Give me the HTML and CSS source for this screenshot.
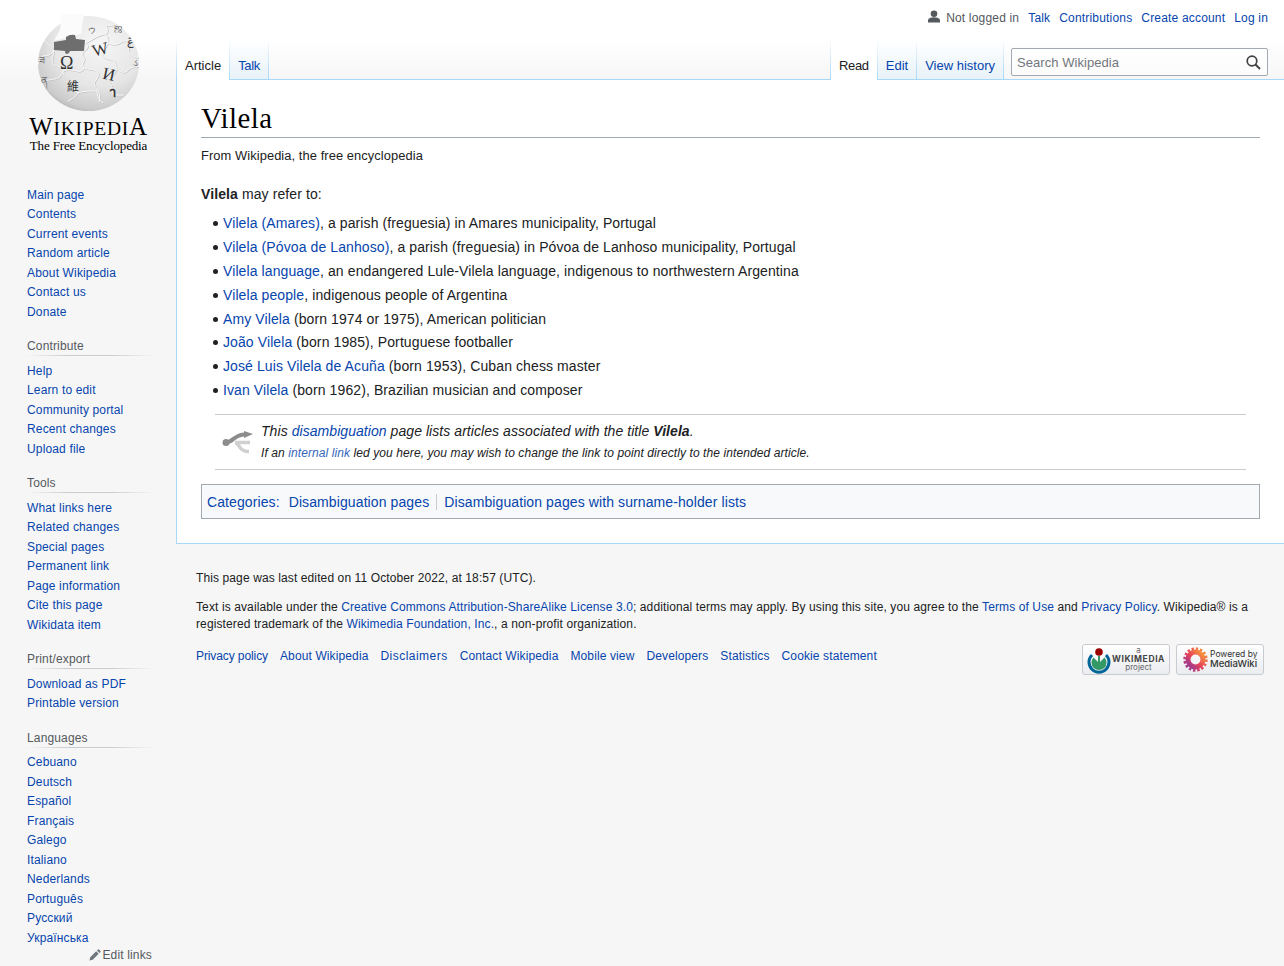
FILE: index.html
```html
<!DOCTYPE html>
<html lang="en">
    <head>
        <meta charset="UTF-8" />
        <title>Vilela - Wikipedia</title>
        <link rel="stylesheet" href="styles.css">
    </head>
    <body>
        <div class="page">
            <!-- 侧边栏 -->
            <aside class="sidebar">
                <a class="logo" href="#">
                    <svg class="globe" width="176" height="116" viewBox="0 0 176 116">
                        <defs>
                            <radialGradient id="ball" cx="0.6" cy="0.3" r="0.8">
                                <stop offset="0" stop-color="#f6f6f6" />
                                <stop offset="0.55" stop-color="#e6e6e6" />
                                <stop offset="0.85" stop-color="#cbcbcb" />
                                <stop offset="1" stop-color="#9e9e9e" />
                            </radialGradient>
                            <!-- 拼图线 -->
                            <g id="puzzle" fill="none" stroke-width="1">
                                <path d="M85 43c5 3 2 6 -1 8c-4 3 0 6 1 8c-2 3 -3 6 -1 9c5 2 9 1 13 3c3 3 1 6 -1 9c-3 3 -1 7 2 10c2 4 2 8 1 12" />
                                <path d="M85 43c6 -2 12 -8 20 -9c4 -1 3 -5 1 -8c3 -1 7 0 10 -2" />
                                <path d="M105 34c4 3 3 6 3 9c4 2 8 2 12 0c3 -3 5 -2 9 -1c1 4 0 7 -1 10c3 4 6 5 10 6" />
                                <path d="M108 43c-2 5 -5 7 -6 11c1 4 5 6 11 5c3 3 2 6 4 10c3 3 5 4 9 3c3 -3 6 -6 12 -5" />
                                <path d="M117 69c-2 5 -6 8 -8 11c2 5 4 8 4 14c3 2 7 1 11 1" />
                                <path d="M44 40c3 4 7 6 10 8M54 50c-2 5 -7 6 -11 6c-3 3 -4 6 -5 9" />
                                <path d="M54 51c-1 6 -3 10 -1 14c5 1 8 2 10 6c-1 4 -3 7 -8 8c-4 0 -7 2 -10 1" />
                                <path d="M63 71c5 -2 8 -1 14 0c3 2 8 -2 7 -3M63 71c0 4 3 7 7 10c3 5 5 9 8 12c-2 4 -6 6 -10 8" />
                                <path d="M78 93c5 -2 11 -2 19 -2M97 91c0 6 3 9 6 12" />
                            </g>
                        </defs>
                        <ellipse cx="88.500" cy="63.500" rx="50.500" ry="47.500" fill="url(#ball)" />
                        <use href="#puzzle" x="0.600" y="0.600" stroke="#bdbdbd" />
                        <use href="#puzzle" stroke="#f8f8f8" />
                        <!-- 顶部缺口 -->
                        <path d="M62 14L84 14L81 34L73 36L54 41L60 30Z" fill="#fbfbfb" />
                        <path d="M54 42L66 40L66 37Q70 34 75 35L76 39L85 40L84 51L70 51Q69 54 67 54Q65 54 65 51L54 50Z" fill="#6e6e6e" />
                        <g class="globe-glyphs">
                            <text x="60" y="69" font-size="18">Ω</text>
                            <text x="92" y="55" font-size="17" transform="rotate(-14 100 49)">W</text>
                            <text x="103" y="80" font-size="17" transform="rotate(12 110 73)">И</text>
                            <text x="67" y="91" font-size="12" class="glyph-cjk">維</text>
                            <text x="109" y="97" font-size="13" font-weight="bold">า</text>
                            <text x="127" y="45" font-size="11">ڠ</text>
                            <text x="39" y="64" font-size="10" fill="#666">ཟ</text>
                            <text x="41" y="84" font-size="10" fill="#666">ན</text>
                            <text x="133" y="66" font-size="9" fill="#777">ડ</text>
                            <text x="88" y="33" font-size="8" fill="#555">ウ</text>
                            <text x="114" y="30" font-size="10" fill="#444">ஜ</text>
                        </g>
                    </svg>
                    <div class="wordmark"><span class="big">W</span>IKIPEDI<span class="big">A</span></div>
                    <div class="tagline">The Free Encyclopedia</div>
                </a>

                <ul class="nav-list first">
                    <li><a href="#">Main page</a></li>
                    <li><a href="#">Contents</a></li>
                    <li><a href="#">Current events</a></li>
                    <li><a href="#">Random article</a></li>
                    <li><a href="#">About Wikipedia</a></li>
                    <li><a href="#">Contact us</a></li>
                    <li><a href="#">Donate</a></li>
                </ul>

                <h3 class="nav-title">Contribute</h3>
                <ul class="nav-list">
                    <li><a href="#">Help</a></li>
                    <li><a href="#">Learn to edit</a></li>
                    <li><a href="#">Community portal</a></li>
                    <li><a href="#">Recent changes</a></li>
                    <li><a href="#">Upload file</a></li>
                </ul>

                <h3 class="nav-title">Tools</h3>
                <ul class="nav-list">
                    <li><a href="#">What links here</a></li>
                    <li><a href="#">Related changes</a></li>
                    <li><a href="#">Special pages</a></li>
                    <li><a href="#">Permanent link</a></li>
                    <li><a href="#">Page information</a></li>
                    <li><a href="#">Cite this page</a></li>
                    <li><a href="#">Wikidata item</a></li>
                </ul>

                <h3 class="nav-title">Print/export</h3>
                <ul class="nav-list">
                    <li><a href="#">Download as PDF</a></li>
                    <li><a href="#">Printable version</a></li>
                </ul>

                <h3 class="nav-title">Languages</h3>
                <ul class="nav-list">
                    <li><a href="#">Cebuano</a></li>
                    <li><a href="#">Deutsch</a></li>
                    <li><a href="#">Español</a></li>
                    <li><a href="#">Français</a></li>
                    <li><a href="#">Galego</a></li>
                    <li><a href="#">Italiano</a></li>
                    <li><a href="#">Nederlands</a></li>
                    <li><a href="#">Português</a></li>
                    <li><a href="#">Русский</a></li>
                    <li><a href="#">Українська</a></li>
                </ul>
                <div class="edit-links">
                    <svg width="12" height="12" viewBox="0 0 12 12">
                        <path d="M0.500 11.500l0.700 -3.200l6 -6l2.500 2.500l-6 6zM8 1.500l1 -1q0.500 -0.400 1 0l1.500 1.500q0.400 0.500 0 1l-1 1z" fill="#72777d" />
                    </svg>
                    <span>Edit links</span>
                </div>
            </aside>

            <div class="main">
                <!-- 顶部 -->
                <header class="head">
                    <div class="personal">
                        <svg class="user-icon" width="14" height="14" viewBox="0 0 14 14">
                            <circle cx="7" cy="3.800" r="3.300" fill="#54595d" />
                            <path d="M1 12.500v-2.300q0 -2 2.500 -2.500q3.500 -0.800 7 0q2.500 0.500 2.500 2.500v2.300z" fill="#54595d" />
                        </svg>
                        <span class="not-logged">Not logged in</span>
                        <a href="#">Talk</a>
                        <a href="#">Contributions</a>
                        <a href="#">Create account</a>
                        <a href="#">Log in</a>
                    </div>
                    <nav class="tabs">
                        <div class="tab-group left">
                            <a class="tab active" href="#">Article</a>
                            <a class="tab narrow" href="#">Talk</a>
                        </div>
                        <div class="tab-group right">
                            <a class="tab active narrow" href="#">Read</a>
                            <a class="tab" href="#">Edit</a>
                            <a class="tab" href="#">View history</a>
                        </div>
                        <div class="search">
                            <span class="search-text">Search Wikipedia</span>
                            <svg width="15" height="15" viewBox="0 0 15 15">
                                <circle cx="6" cy="6" r="4.800" fill="none" stroke="#404244" stroke-width="1.700" />
                                <path d="M9.500 9.500l4.500 4.500" stroke="#404244" stroke-width="2" />
                            </svg>
                        </div>
                    </nav>
                </header>

                <!-- 正文 -->
                <main class="content">
                    <h1 class="title">Vilela</h1>
                    <div class="site-sub">From Wikipedia, the free encyclopedia</div>
                    <p class="intro"><b>Vilela</b> may refer to:</p>
                    <ul class="entries">
                        <li><a href="#">Vilela (Amares)</a>, a parish (freguesia) in Amares municipality, Portugal</li>
                        <li><a href="#">Vilela (Póvoa de Lanhoso)</a>, a parish (freguesia) in Póvoa de Lanhoso municipality, Portugal</li>
                        <li><a href="#">Vilela language</a>, an endangered Lule-Vilela language, indigenous to northwestern Argentina</li>
                        <li><a href="#">Vilela people</a>, indigenous people of Argentina</li>
                        <li><a href="#">Amy Vilela</a> (born 1974 or 1975), American politician</li>
                        <li><a href="#">João Vilela</a> (born 1985), Portuguese footballer</li>
                        <li><a href="#">José Luis Vilela de Acuña</a> (born 1953), Cuban chess master</li>
                        <li><a href="#">Ivan Vilela</a> (born 1962), Brazilian musician and composer</li>
                    </ul>
                    <div class="dab-note">
                        <svg class="dab-icon" width="31" height="24" viewBox="0 0 31 24">
                            <path d="M13 11.500h15M13 12c5 0 3 8.500 14 8.500" fill="none" stroke="#d0d0d0" stroke-width="3.500" />
                            <path d="M4 11.500c7 0 8 -8 19 -8" fill="none" stroke="#8c8c8c" stroke-width="4" />
                            <circle cx="4" cy="11.500" r="3.500" fill="#8c8c8c" />
                            <path d="M22 0l9 3l-9 4z" fill="#8c8c8c" />
                        </svg>
                        <div class="dab-text">
                            <div class="dab-main">This <a href="#">disambiguation</a> page lists articles associated with the title <b>Vilela</b>.</div>
                            <div class="dab-small">If an <a class="redirect" href="#">internal link</a> led you here, you may wish to change the link to point directly to the intended article.</div>
                        </div>
                    </div>
                    <div class="categories">
                        <a href="#">Categories:</a>
                        <a class="cat first-cat" href="#">Disambiguation pages</a>
                        <a class="cat" href="#">Disambiguation pages with surname-holder lists</a>
                    </div>
                </main>

                <!-- 页脚 -->
                <footer class="footer">
                    <p class="edited">This page was last edited on 11 October 2022, at 18:57 (UTC).</p>
                    <p class="license">Text is available under the <a href="#">Creative Commons Attribution-ShareAlike License 3.0</a>; additional terms may apply. By using this site, you agree to the <a href="#">Terms of Use</a> and <a href="#">Privacy Policy</a>. Wikipedia® is a registered trademark of the <a href="#">Wikimedia Foundation, Inc.</a>, a non-profit organization.</p>
                    <div class="foot-row">
                        <div class="foot-links">
                            <a class="tight" href="#">Privacy policy</a>
                            <a href="#">About Wikipedia</a>
                            <a class="loose" href="#">Disclaimers</a>
                            <a href="#">Contact Wikipedia</a>
                            <a href="#">Mobile view</a>
                            <a href="#">Developers</a>
                            <a href="#">Statistics</a>
                            <a href="#">Cookie statement</a>
                        </div>
                        <div class="badges">
                            <div class="badge">
                                <svg width="24" height="29" viewBox="0 0 24 29">
                                    <path d="M5 10A10 10 0 1 0 19 10" fill="none" stroke="#069" stroke-width="3" />
                                    <path d="M6.500 12.500A7.500 7.500 0 1 0 17.500 12.500L13 17V11H11V17Z" fill="#396" />
                                    <circle cx="12" cy="7" r="3.800" fill="#900" />
                                </svg>
                                <div class="badge-wm">
                                    <span class="wm-a">a</span>
                                    <span class="wm-name">WIKIMEDIA</span>
                                    <span class="wm-a">project</span>
                                </div>
                            </div>
                            <div class="badge flower-badge">
                                <svg width="25" height="25" viewBox="0 0 25 25">
                                    <defs>
                                        <linearGradient id="flower" x1="0" y1="1" x2="1" y2="0">
                                            <stop offset="0" stop-color="#8a3a9c" />
                                            <stop offset="0.45" stop-color="#e8415a" />
                                            <stop offset="1" stop-color="#f8a13a" />
                                        </linearGradient>
                                    </defs>
                                    <circle cx="12.500" cy="12.500" r="7.500" fill="none" stroke="url(#flower)" stroke-width="5" />
                                    <circle cx="12.500" cy="12.500" r="10.700" fill="none" stroke="url(#flower)" stroke-width="3" stroke-dasharray="2.400 1.800" />
                                </svg>
                                <div class="badge-mw">
                                    <span>Powered by</span>
                                    <span class="mw-name">MediaWiki</span>
                                </div>
                            </div>
                        </div>
                    </div>
                </footer>
            </div>
        </div>
    </body>
</html>
```

FILE: styles.css
```css
* {
    margin: 0;
    padding: 0;
    box-sizing: border-box;
}
html,
body {
    height: 966px;
    overflow: hidden;
}
body {
    background: #f6f6f6;
    color: #202122;
    font-family: "Liberation Sans", Arial, sans-serif;
    font-size: 14px;
}
a {
    color: #0645ad;
    text-decoration: none;
}
ul {
    list-style: none;
}

.page {
    display: flex;
    height: 966px;
    background: linear-gradient(#fff 50%, #f6f6f6 100%) no-repeat;
    background-size: 100% 80px;
}

/* 侧边栏 */
.sidebar {
    width: 176px;
    flex-shrink: 0;
    padding-left: 27px;
    font-size: 12px;
    letter-spacing: 0.150px;
}
.logo {
    display: block;
    width: 176px;
    height: 185.500px;
    margin-left: -27px;
    color: #000;
    text-align: center;
    font-family: "Liberation Serif", serif;
    letter-spacing: 0;
}
.globe {
    display: block;
}
.globe-glyphs {
    font-family: "Liberation Serif", "DejaVu Sans", "Noto Sans", serif;
    fill: #333;
}
.glyph-cjk {
    font-family: "Noto Sans CJK TC", sans-serif;
}
.wordmark {
    width: 177px;
    font-size: 19.500px;
    line-height: 22px;
    letter-spacing: 0.700px;
}
.wordmark .big {
    font-size: 25px;
}
.tagline {
    width: 177px;
    margin-top: -1px;
    font-size: 13px;
    line-height: 14px;
    letter-spacing: -0.150px;
}
.nav-list {
    width: 125px;
    margin-top: 5.500px;
}
.nav-list.first {
    margin-top: 0;
}
.nav-list li {
    padding: 3px 0;
    line-height: 13.500px;
}
.nav-title {
    width: 125px;
    margin-top: 16.100px;
    padding-bottom: 1px;
    border-bottom: 1px solid;
    border-image: linear-gradient(to right, rgba(200, 204, 209, 0), #c8ccd1 33%, #c8ccd1 66%, rgba(200, 204, 209, 0)) 1;
    color: #54595d;
    font-size: 12px;
    font-weight: normal;
    line-height: 16px;
}
.edit-links {
    display: flex;
    justify-content: flex-end;
    align-items: center;
    gap: 1px;
    width: 125px;
    height: 14px;
    color: #54595d;
}

/* 顶部 */
.main {
    flex: 1;
    min-width: 0;
}
.head {
    height: 79px;
}
.personal {
    display: flex;
    justify-content: flex-end;
    gap: 9px;
    height: 40px;
    padding: 10px 16px 0 0;
    font-size: 12px;
    line-height: 16px;
    letter-spacing: 0.180px;
}
.user-icon {
    margin-right: -4px;
}
.not-logged {
    color: #54595d;
}
.tabs {
    position: relative;
    z-index: 1;
    display: flex;
    height: 40px;
    padding-right: 16px;
}
.tab-group {
    display: flex;
    font-size: 13px;
    line-height: 16px;
}
.tab-group.left,
.tab-group.right {
    border-left: 1px solid;
    border-image: linear-gradient(to bottom, rgba(167, 215, 249, 0), #a7d7f9) 1;
}
.tab-group.right {
    margin-left: auto;
}
.tab {
    height: 39px;
    padding: 18px 8px 0;
    border-right: 1px solid;
    border-image: linear-gradient(to bottom, rgba(167, 215, 249, 0), #a7d7f9) 1;
    background: linear-gradient(to bottom, #fff 0%, #e8f2f8 100%);
}
.tab.active {
    height: 40px;
    background: linear-gradient(#fff, #fff);
    color: #202122;
}
.tab.narrow {
    letter-spacing: -0.350px;
}
.search {
    display: flex;
    justify-content: space-between;
    align-items: center;
    width: 257px;
    height: 28px;
    margin: 8px 0 0 7px;
    padding: 0 6px 0 5px;
    border: 1px solid #a2a9b1;
    border-radius: 2px;
    background: rgba(255, 255, 255, 0.5);
}
.search-text {
    color: #72777d;
    font-size: 13px;
    letter-spacing: 0.050px;
}

/* 正文 */
.content {
    height: 465px;
    padding: 20px 24px 24px;
    border-top: 1px solid #a7d7f9;
    border-left: 1px solid #a7d7f9;
    border-bottom: 1px solid #a7d7f9;
    background: #fff;
    line-height: 22.400px;
    letter-spacing: 0.100px;
}
.title {
    border-bottom: 1px solid #a2a9b1;
    color: #000;
    font-family: "Liberation Serif", serif;
    font-size: 28.800px;
    font-weight: normal;
    line-height: 37.440px;
    letter-spacing: 0.500px;
}
.site-sub {
    margin: 7.200px 0 17px;
    font-size: 12.880px;
    line-height: 20.600px;
    letter-spacing: 0.080px;
}
.intro {
    margin-bottom: 6.700px;
}
.entries li {
    position: relative;
    margin: 0 0 1.400px 22px;
}
.entries li::before {
    content: "";
    position: absolute;
    left: -10px;
    top: 9px;
    width: 5px;
    height: 5px;
    border-radius: 50%;
    background: #202122;
}
.dab-note {
    display: flex;
    margin: 13px 14px 14px;
    padding: 5px 0 6.500px;
    border-top: 1px solid #c8ccd1;
    border-bottom: 1px solid #c8ccd1;
    font-style: italic;
    letter-spacing: 0.060px;
}
.dab-icon {
    flex-shrink: 0;
    margin: 11px 8px 0 7px;
}
.dab-small {
    margin-top: 1px;
    font-size: 12px;
    line-height: 19.200px;
    letter-spacing: 0.090px;
}
.redirect {
    color: #3366bb;
}
.categories {
    display: flex;
    align-items: center;
    height: 35px;
    padding: 1px 5px 0;
    border: 1px solid #a2a9b1;
    background: #f8f9fa;
}
.cat {
    padding: 0 7px;
    line-height: 16px;
    border-left: 1px solid #c8ccd1;
}
.first-cat {
    margin-left: 2px;
    border-left: 0;
}

/* 页脚 */
.footer {
    padding: 26px 20px 0;
    font-size: 12px;
    line-height: 17px;
    letter-spacing: 0.110px;
}
.edited {
    margin-bottom: 11.500px;
}
.foot-row {
    display: flex;
    justify-content: space-between;
    margin-top: 11px;
}
.foot-links {
    display: flex;
    gap: 12px;
    padding-top: 4px;
    letter-spacing: 0.120px;
}
.foot-links .tight {
    letter-spacing: -0.100px;
}
.foot-links .loose {
    letter-spacing: 0.470px;
}
.badges {
    display: flex;
    gap: 6px;
    letter-spacing: 0;
}
.badge {
    display: flex;
    align-items: center;
    gap: 1px;
    width: 88px;
    height: 31px;
    padding-left: 4px;
    border: 1px solid #c8ccd1;
    border-radius: 3px;
    background: linear-gradient(#fff, #eaecf0);
    color: #333;
    font-family: "Inter", "Liberation Sans", sans-serif;
}
.flower-badge {
    padding-left: 6px;
    gap: 2px;
}
.badge-wm {
    display: flex;
    flex-direction: column;
    align-items: center;
    color: #666;
    font-size: 8px;
    line-height: 8.500px;
}
.wm-name {
    color: #444;
    font-weight: bold;
    font-size: 8.500px;
    letter-spacing: 0.600px;
}
.badge-mw {
    display: flex;
    flex-direction: column;
    font-size: 8.500px;
    line-height: 10.500px;
    white-space: nowrap;
}
.mw-name {
    font-weight: 500;
    font-size: 9.500px;
}
```
